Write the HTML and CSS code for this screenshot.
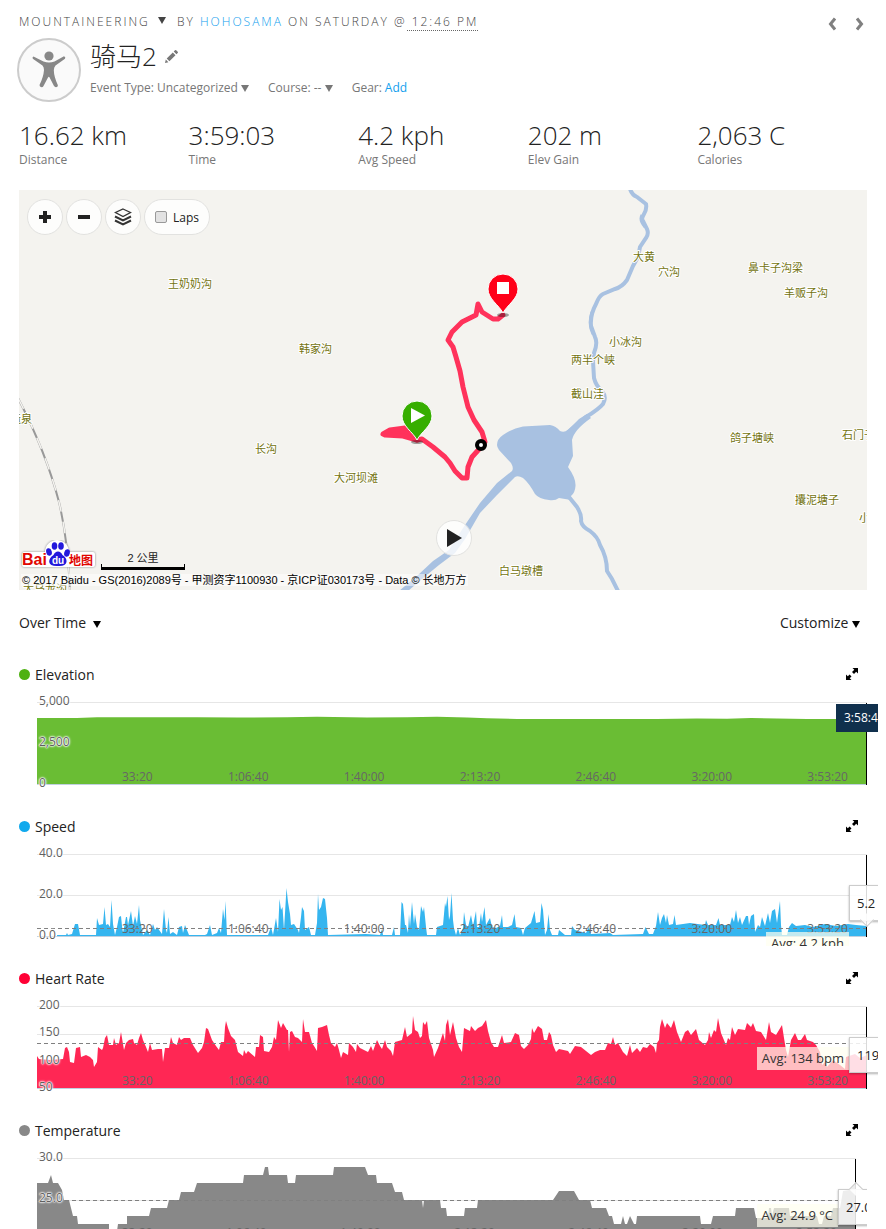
FILE: index.html
```html
<!DOCTYPE html>
<html lang="en">
<head>
  <meta charset="UTF-8" />
  <meta name="viewport" content="width=device-width, initial-scale=1.0"/>
  <title>骑马2 | Activity</title>
  <link rel="stylesheet" href="styles.css">
</head>
<body>
  <!-- shared icons -->
  <svg class="sprite" aria-hidden="true">
    <symbol id="expand" viewBox="0 0 12 12">
      <path d="M6.500 0H12v5.500L10.200 3.700 8 6 6 4l2.300-2.200zM5.500 12H0V6.500l1.800 1.800L3.600 6.600l1.900 1.900-1.800 1.700z"/>
    </symbol>
    <symbol id="pin" viewBox="-16 -40 32 44" overflow="visible">
      <ellipse cx="0" cy="2" rx="6" ry="2" fill="#000" opacity=".35"/>
      <path d="M0 0C-4-8-15-14-15-24A15 15 0 0 1 15-24C15-14 4-8 0 0z" stroke="#fff" stroke-width="1"/>
    </symbol>
  </svg>

  <div class="page">
    <header class="topline">
      <div class="crumb">
        <select id="activity-type" aria-label="Activity type"><option>Mountaineering</option></select>
        <span class="caret"></span>
        <span class="by">by <a href="#">hohosama</a> on Saturday @<span class="time"> 12:46 PM</span></span>
      </div>
      <nav class="pager">
        <a href="#" aria-label="Previous activity"><svg width="8" height="14" viewBox="0 0 8 14"><path d="M7 1.500 2.500 7 7 12.500"/></svg></a>
        <a href="#" aria-label="Next activity"><svg width="8" height="14" viewBox="0 0 8 14"><path d="M1 1.500 5.500 7 1 12.500"/></svg></a>
      </nav>
    </header>

    <section class="profile">
      <div class="avatar">
        <svg width="34" height="38" viewBox="0 0 34 38">
          <circle cx="17" cy="5" r="4.600"/>
          <path d="M1.500 5.500Q0 6 .8 7.800L10.500 14.500Q12 16 12 19 11.500 26 7.500 34 7.500 36 9.500 36.300 11 36.300 11.500 35L16 26.500Q16.800 25 17.600 26.500L22 35Q23 36.500 24.800 36 26.300 35.300 25.800 34 22 26 21.800 19 22 16 23.500 14.500L33 7.800Q34 6 32 5.300L22.500 10.500Q17 12.500 11.500 10.500z"/>
        </svg>
      </div>
      <div>
        <h1>骑马2
          <button class="edit" aria-label="Edit name">
            <svg width="13" height="13" viewBox="0 0 13 13"><path d="M0 13 .8 9.600 3.400 12.200zM1.700 8.600 7.800 2.500 10.500 5.200 4.400 11.300zM8.700 1.600 10 .3Q10.600-.2 11.200.3L12.700 1.800Q13.200 2.400 12.700 3L11.400 4.300z"/></svg>
          </button>
        </h1>
        <div class="meta">
          <div class="field">
            <label for="event-type">Event Type:</label>
            <select id="event-type"><option>Uncategorized</option></select>
            <span class="caret"></span>
          </div>
          <div class="field">
            <label for="course">Course:</label>
            <select id="course"><option>--</option></select>
            <span class="caret"></span>
          </div>
          <div class="field">Gear: <a href="#">Add</a></div>
        </div>
      </div>
    </section>

    <section class="stats">
      <div><strong>16.62 km</strong><span>Distance</span></div>
      <div><strong>3:59:03</strong><span>Time</span></div>
      <div><strong>4.2 kph</strong><span>Avg Speed</span></div>
      <div><strong>202 m</strong><span>Elev Gain</span></div>
      <div><strong>2,063 C</strong><span>Calories</span></div>
    </section>

    <section class="map">
      <svg class="map-canvas" viewBox="0 0 848 400" preserveAspectRatio="xMidYMid slice">
        <!-- water -->
        <g class="river">
          <path stroke-width="4" d="M611-1Q613 5 618 7L627 14Q628 19 625 24T624 31L628 39Q630 44 627 48L621 57 619 67 614 76 608 90Q603 97 596 99L584 104Q580 106 577 114 571 125 572 136L576 147Q579 153 575 163L574 171 575 188Q577 196 583 201 588 207 584 214 580 219 567 227L548 243"/>
          <path stroke-width="3" d="M573 122Q569 134 574 144M623 25Q620 30 626 37"/>
          <path stroke-width="4" d="M550 307 558 317Q563 325 562 331 563 337 571 341 579 347 581 355 588 367 588 381L593 389 599 401"/>
        </g>
        <g class="lake">
          <path d="M478 255Q478 249 484 245 494 238 504 236.500L531 235Q537 236 541 241 545 243 549 240L560 229 568 224 572 228Q555 240 553 250L554 266 549 277Q557 288 556.500 296 556 303 552 306V310L540 308Q536 311 530 310 520 309 516 304 510 293 504 288 499 285 496 287L478 305 461 323 446 349 436 363 420 375 403 389 389 401H380L398 386 414 371 430 360 446 335 461 313 478 293 493 281Q495 278 492 273L480 260Q478 257 478 255z"/>
        </g>

        <!-- railway -->
        <path class="rail" d="M-1 208Q27 262 40 312 49 350 51 401"/>
        <path class="rail-gap" d="M-1 208Q27 262 40 312 49 350 51 401"/>

        <!-- recorded track -->
        <path class="track" d="M484 125 479 129H474L463 122 459 114 457 125 443 132 433 142 429 150 434 157 437 167 441 181 444 197 449 217 455 230 463 242 466 252 462 257 453 267 449 277 448 288H443L436 281 431 273 426 267 414 257 403 249 398 250"/>
        <path class="track-fill" d="M364 244 371 240 386 238 398 240V250L384 246 366 245z"/>
        <circle cx="462" cy="255" r="4" fill="#fff" stroke="#000" stroke-width="4"/>

        <g class="places">
          <text x="149" y="98">王奶奶沟</text>
          <text x="280" y="163">韩家沟</text>
          <text x="614" y="71">大黄</text>
          <text x="639" y="86">穴沟</text>
          <text x="729" y="82">鼻卡子沟梁</text>
          <text x="765" y="107">羊贩子沟</text>
          <text x="590" y="156">小冰沟</text>
          <text x="552" y="174">两半个峡</text>
          <text x="552" y="208">截山洼</text>
          <text x="711" y="252">鸽子塘峡</text>
          <text x="823" y="249">石门子</text>
          <text x="776" y="314">攮泥塘子</text>
          <text x="840" y="332">小沟</text>
          <text x="480" y="385">白马墩槽</text>
          <text x="236" y="263">长沟</text>
          <text x="315" y="292">大河坝滩</text>
          <text x="-9" y="233">造泉</text>
          <text x="4" y="403">大乌龙沟</text>
        </g>

        <use href="#pin" x="468" y="83" width="32" height="44" fill="#ff0019"/>
        <rect x="478" y="92" width="12" height="12" fill="#fff"/>
        <use href="#pin" x="382" y="210" width="32" height="44" fill="#36ae00"/>
        <path d="M392 218 406 225.500 392 233z" fill="#fff"/>
      </svg>

      <div class="map-controls">
        <button aria-label="Zoom in"><svg width="14" height="14" viewBox="0 0 14 14"><path d="M5 1H9V5H13V9H9V13H5V9H1V5H5z" fill="#222"/></svg></button>
        <button aria-label="Zoom out"><svg width="14" height="14" viewBox="0 0 14 14"><path d="M1 5H13V9H1z" fill="#222"/></svg></button>
        <button aria-label="Map layers">
          <svg width="18" height="18" viewBox="0 0 18 18" fill="none" stroke="#333"><path d="M9 1 16.500 4.500 9 8.500 1.500 4.500z" stroke-width="1.300"/><path d="M1 8.500 9 12.500 17 8.500M1 12.500 9 16.500 17 12.500" stroke-width="2"/></svg>
        </button>
        <label class="laps"><input type="checkbox"> Laps</label>
      </div>

      <button class="play" aria-label="Play"><svg width="15" height="18" viewBox="0 0 15 18"><path d="M0 0 15 9 0 18z" fill="#222"/></svg></button>

      <div class="map-legend">
        <svg class="baidu" width="77" height="30" viewBox="0 0 77 30">
          <g class="baidu-halo">
            <path d="M4 14H73V25H4z"/>
            <circle cx="37" cy="12" r="10"/>
          </g>
          <text class="baidu-name" x="2" y="25">Bai</text>
          <g fill="#2319dc">
            <ellipse cx="29" cy="12" rx="2.800" ry="3.800" transform="rotate(-15 29 12)"/>
            <ellipse cx="34.500" cy="6" rx="2.800" ry="3.800"/>
            <ellipse cx="41" cy="6" rx="2.800" ry="3.800"/>
            <ellipse cx="47" cy="13" rx="2.800" ry="3.800" transform="rotate(15 47 13)"/>
            <path d="M38 11.500Q41 11.500 42.500 15 47 18 46.500 22 45.500 26.500 38 26 30 26.500 29.200 22 29 18 33.500 15 35 11.500 38 11.500z"/>
          </g>
          <text class="baidu-du" x="32" y="24">du</text>
          <text class="baidu-map" x="49" y="25">地图</text>
        </svg>
        <div class="scale">2 公里</div>
      </div>
      <div class="copyright">© 2017 Baidu - GS(2016)2089号 - 甲测资字1100930 - 京ICP证030173号 - Data © 长地万方</div>
    </section>

    <div class="chart-tools">
      <button>Over Time <span class="caret"></span></button>
      <button>Customize <span class="caret"></span></button>
    </div>

    <section class="chart">
      <div class="chart-head">
        <h2 class="elevation">Elevation</h2>
        <button aria-label="Expand elevation"><svg width="12" height="12"><use href="#expand"/></svg></button>
      </div>
      <div class="chart-frame">
        <div class="plot">
          <svg viewBox="0 0 830 83" preserveAspectRatio="none">
            <path class="grid" d="M0 .5H830M0 41.500H830"/>
            <path fill="#6abd34" d="M0 83V16H40L60 15.300H160L200 15.600 250 15.300 280 14.700 330 15.500 370 15.300 400 14.800 430 15.500 450 16.300 480 17H620L660 16.600 690 16.700 714 16 740 16.600 770 17H830V83z"/>
            <path class="axis" d="M0 82.500H830"/>
          </svg>
          <div class="y-axis"><span>5,000</span><span>2,500</span><span>0</span></div>
          <div class="x-axis"><span>33:20</span><span>1:06:40</span><span>1:40:00</span><span>2:13:20</span><span>2:46:40</span><span>3:20:00</span><span>3:53:20</span></div>
          <div class="cursor"></div>
          <div class="tip tip-time">3:58:43</div>
        </div>
      </div>
    </section>

    <section class="chart">
      <div class="chart-head">
        <h2 class="speed">Speed</h2>
        <button aria-label="Expand speed"><svg width="12" height="12"><use href="#expand"/></svg></button>
      </div>
      <div class="chart-frame">
        <div class="plot">
          <svg viewBox="0 0 830 83" preserveAspectRatio="none">
            <path class="grid" d="M0 .5H830M0 41.500H830"/>
            <path fill="#35b5ef" d="M0 83H20V81L29 81 30 79 31 81 35 80 38 70 41 70 43 81 59 81 60 64 62 71 66 70 67.500 53 69 71 71 70 73 73 74.500 46 76 70 78 81 80 73 82 63 84 62 85 72 86 79 89 63 90 63 91 71 94 57 96 72 98 62 100 70 102 51 103 66 106 81 110 76 113 81 116 70 118 76 120 73 125 80 127 55 129 76 130 79 131.500 63 133 80 136 78 140 81 142 73 145 72 146 79 148 71 152 81 168 81 170 80 173 71 175 81 180 79 182 74 184 79 186 55 187.500 66 188.500 47 190 81 231 81 234 73 236 81 239 64 241 78 242.500 45 244 56 245.500 53 247 76 248 59 249.500 34 251 48 253 60 254 71 257 70 261 76 262 79 264 63 265 53 267 57 268 76 272 73 274 81 278 81 280 69 281 40 282 56 284 53 286 44 288 45 290 64 291 81 329 80 343 81 345 75 346 81 355 81 357 73 358 81 363 81 364.500 48 366 50 368 71 369 71 371 79 372 60 373 73 375 48 377 70 378 60 380 73 382 76 384 52 386 58 387 53 389 73 390 81 399 81 400 73 406 71 408 49 409 53 410.500 42 412 66 413 62 414.500 39 416 66 417 74 419 81 421 74 423 81 426 74 427 58 429 71 431 73 434 61 436 72 439 57 440 73 442 73 444 59 445 68 447.500 53 449 71 453 64 455 73 459 74 463 72 465 61 466 73 471 73 475 71 477.500 60 479 73 484 74 486 81 488 74 494 69 497.500 57 499 69 503 68 504.500 49 506 56 508 81 510 76 511.500 60 513 76 515 81 521 81 522 76 528 81 534 81 535 72 538 76 549 79 552 73 554 80 573 79 576 81 606 80 608.500 73 612 80 616 80 619 72 621 58 623 71 625 64 627 60 629 69 630 61 632 71 636 70 637.500 61 639 71 653 69 668 71 669 66 671 71 679 71 681.500 64 683 71 693 71 695 63 697 68 699 56 701 69 703 63 705 71 709 62 711 62 712 71 714 62 717 60 718 78 721 71 723 73 725 63 728 72 731 59 733 69 735 57 738 55 740 69 743 47 744 71 745 81 750 81 752 73 755 69 759 72 768 71 776 73 788 70 799 72 811 70 819 71 830 72V83z"/>
            <path class="axis" d="M0 82.500H830"/>
            <path class="average" d="M0 74.500H830"/>
          </svg>
          <div class="y-axis"><span>40.0</span><span>20.0</span><span>0.0</span></div>
          <div class="x-axis"><span>33:20</span><span>1:06:40</span><span>1:40:00</span><span>2:13:20</span><span>2:46:40</span><span>3:20:00</span><span>3:53:20</span></div>
          <div class="cursor"></div>
          <div class="avg avg-speed">Avg: 4.2 kph</div>
          <div class="tip tip-speed">5.2 kph</div>
        </div>
      </div>
    </section>

    <section class="chart">
      <div class="chart-head">
        <h2 class="heart">Heart Rate</h2>
        <button aria-label="Expand heart rate"><svg width="12" height="12"><use href="#expand"/></svg></button>
      </div>
      <div class="chart-frame">
        <div class="plot">
          <svg viewBox="0 0 830 83" preserveAspectRatio="none">
            <path class="grid" d="M0 .5H830M0 28.500H830"/>
            <path fill="#ff2754" d="M0 83V50L2 53 13 54 26 53 28 42 30 41 32 46 33 56 37 57 39 42 43 41 44 51 49 49 53 51 56 54 57 61 60 56 61 41 65 44 66 42 68 32 70 29 72 39 76 39 77 32 79 39 82 37 84 26 85 32 87 44 89 37 92 34 96 33 97 37 100 39 102 32 104 27 106 34 109 41 111 46 113 37 115 44 121 43 125 43 126 56 128 42 132 42 134 31 136 37 140 39 142 31 144 34 147 32 153 32 156 39 161 47 165 42 167 36 169 22 171 23 175 34 179 40 182 44 184 36 187 36 188 21 189 15 191 22 194 30 198 34 201 46 206 50 207 44 209 48 211 45 218 51 219 41 222 41 223 29 226 31 227 45 232 46 235 41 237 31 239 34 241 14 244 22 246 17 250 24 251 24 252 46 253 26 255 25 258 31 261 32 265 36 266 13 268 26 272 26 275 37 277 40 280 45 281 22 285 21 290 19 292 29 294 37 298 41 300 37 302 44 304 52 306 46 311 49 312 37 316 41 319 46 320 38 323 42 331 46 334 40 336 45 340 34 343 40 345 43 348 34 350 41 354 45 356 50 358 36 365 34 368 21 370 31 375 27 376 10 378 24 381 26 383 32 385 30 386 16 388 19 390 15 392 32 396 44 397 51 401 42 406 27 408 35 409 19 411 13 413 29 416 16 419 32 422 41 425 46 427 22 433 25 434 20 438 25 441 22 445 20 449 14 451 25 454 36 457 41 461 41 465 29 467 37 474 36 478 27 482 29 484 40 487 43 491 39 494 33 495 22 497 27 501 20 505 23 507 34 510 34 512 26 514 29 516 39 519 46 522 43 531 45 533 48 538 40 544 41 554 49 558 46 563 44 568 44 571 37 574 38 576 31 578 39 581 37 586 46 590 50 593 39 595 47 600 42 603 46 606 41 610 42 613 38 617 41 619 47 620 37 622 34 623 21 625 13 628 22 630 17 634 22 637 14 640 26 644 36 648 26 651 24 654 29 659 23 662 34 668 39 671 34 672 26 674 32 677 24 679 26 681 12 684 27 689 39 691 32 693 34 695 21 698 29 701 23 708 24 710 17 714 21 716 17 719 25 724 26 729 34 732 16 734 26 739 29 745 19 747 32 749 44 751 51 754 34 758 27 761 34 764 34 768 28 770 34 776 36 779 39 783 46 785 59 788 56 790 61 796 54 803 59 808 63 809 51 818 48 823 52 830 49V83z"/>
            <path class="axis" d="M0 82.500H830"/>
            <path class="average" d="M0 37.500H830"/>
          </svg>
          <div class="y-axis"><span>200</span><span>150</span><span>100</span><span>50</span></div>
          <div class="x-axis"><span>33:20</span><span>1:06:40</span><span>1:40:00</span><span>2:13:20</span><span>2:46:40</span><span>3:20:00</span><span>3:53:20</span></div>
          <div class="cursor"></div>
          <div class="avg avg-heart">Avg: 134 bpm</div>
          <div class="tip tip-heart">119 bpm</div>
        </div>
      </div>
    </section>

    <section class="chart">
      <div class="chart-head">
        <h2 class="temperature">Temperature</h2>
        <button aria-label="Expand temperature"><svg width="12" height="12"><use href="#expand"/></svg></button>
      </div>
      <div class="chart-frame chart-frame-narrow">
        <div class="plot">
          <svg viewBox="0 0 819 83" preserveAspectRatio="none">
            <path class="grid" d="M0 .5H819M0 42.500H819"/>
            <path fill="#888" d="M0 83V25H11L14 17 16 25H21L25 32 27 42H32L34 50 36 58H40L41 66H72V73H80L81 66H90V58H112L114 50H130L132 42H142L144 34H157L160 25H206L207 17H226L228 9H231L232 17H250L251 25H258L259 17H296L297 9H328L331 17H339L340 25H355L358 34H365L367 42H385L386 50 387 42H403L404 50H409L410 58H427L428 50H440L441 42H516L522 33H537L542 42H553L555 50H569L572 58H575L577 66H584L586 58 588 66H590L593 58 597 66H599L600 58H663L664 66H674L676 58H698L699 50H717L719 60H731L732 50H734L735 58 737 50H752L753 58H780L782 66H785L787 58H794L796 50H803L806 33 812 32 818 25H819V83z"/>
            <path class="average" d="M0 42.500H819"/>
          </svg>
          <div class="y-axis"><span>30.0</span><span>25.0</span><span>20.0</span></div>
          <div class="x-axis"><span>33:20</span><span>1:06:40</span><span>1:40:00</span><span>2:13:20</span><span>2:46:40</span><span>3:20:00</span><span>3:53:20</span></div>
          <div class="cursor"></div>
          <div class="avg avg-temperature">Avg: 24.9 °C</div>
          <div class="tip tip-temperature">27.0 °C</div>
        </div>
      </div>
    </section>
  </div>
</body>
</html>
```

FILE: styles.css
```css
* {
  box-sizing: border-box;
  margin: 0;
  padding: 0;
}
body {
  margin: 0 8px;
  background: #fff;
  color: #222;
  font-family: 'Open Sans', 'Noto Sans CJK SC', sans-serif;
  font-size: 12px;
}
a {
  color: #11a0ee;
  text-decoration: none;
}
button,
select {
  appearance: none;
  border: none;
  background: none;
  color: inherit;
  font: inherit;
  letter-spacing: inherit;
  text-transform: inherit;
  cursor: pointer;
}
.sprite {
  position: absolute;
  width: 0;
  height: 0;
}
.page {
  height: 100vh;
  padding: 12px 11px 0;
  overflow: hidden;
}
.caret {
  display: inline-block;
  border: 4px solid transparent;
  border-top: 7px solid currentColor;
  border-bottom: none;
}

/* header */
.topline {
  display: flex;
  justify-content: space-between;
  align-items: center;
  line-height: 20px;
  margin-bottom: 6px;
}
.crumb {
  display: flex;
  align-items: center;
  color: #444;
  font-weight: 300;
  letter-spacing: 2px;
  text-transform: uppercase;
}
.crumb .caret {
  margin: 0 11px 4px 8px;
}
.time {
  border-bottom: 1px dotted #666;
  white-space: pre;
}
.pager {
  display: flex;
  gap: 20px;
  padding: 3px 3px 0 0;
}
.pager svg {
  display: block;
  fill: none;
  stroke: #808080;
  stroke-width: 3;
}
.profile {
  display: flex;
  gap: 9px;
  margin-left: -2px;
}
.avatar {
  display: flex;
  align-items: center;
  justify-content: center;
  width: 64px;
  height: 64px;
  border: 2px solid #ccc;
  border-radius: 50%;
  background: #fafafa;
  fill: #888;
}
h1 {
  display: flex;
  align-items: center;
  gap: 8px;
  font-size: 26px;
  font-weight: 300;
  line-height: 36px;
}
.edit {
  display: flex;
  fill: #777;
}
.meta {
  display: flex;
  gap: 19px;
  margin-top: 5px;
  color: #777;
  line-height: 18px;
}
.field {
  display: flex;
  align-items: center;
  gap: 3px;
}

/* totals */
.stats {
  display: grid;
  grid-template-columns: repeat(5, 1fr);
  margin: 17px 0 22px;
}
.stats strong {
  display: block;
  padding-bottom: 1px;
  font-size: 26px;
  font-weight: 300;
  line-height: 32px;
}
.stats span {
  display: block;
  color: #777;
  line-height: 16px;
}

/* map */
.map {
  position: relative;
  height: 400px;
  overflow: hidden;
  background: #f4f3ef;
}
.map-canvas {
  display: block;
  width: 100%;
  height: 100%;
}
.river path {
  fill: none;
  stroke: #a8c1e1;
}
.lake {
  fill: #a8c1e1;
}
.rail {
  fill: none;
  stroke: #999;
  stroke-width: 2;
}
.rail-gap {
  fill: none;
  stroke: #f4f3ef;
  stroke-width: 1.5;
  stroke-dasharray: 12 10;
}
.track {
  fill: none;
  stroke: #ff325b;
  stroke-width: 5;
  stroke-linejoin: round;
  stroke-linecap: round;
}
.track-fill {
  fill: #ff325b;
  stroke: #ff325b;
  stroke-width: 5;
  stroke-linejoin: round;
}
.places text {
  font-family: 'Noto Sans CJK SC', sans-serif;
  font-size: 11px;
  fill: #73730f;
  stroke: #fff;
  stroke-width: 2;
  stroke-linejoin: round;
  paint-order: stroke;
}
.map-controls {
  position: absolute;
  top: 9px;
  left: 8px;
  display: flex;
  gap: 3px;
}
.map-controls button,
.laps,
.play {
  display: flex;
  align-items: center;
  justify-content: center;
  width: 36px;
  height: 36px;
  border: 1px solid #e2e2e0;
  border-radius: 18px;
  background: rgba(255, 255, 255, 0.8);
}
.laps {
  width: auto;
  padding: 0 10px;
  gap: 6px;
}
.laps input {
  appearance: none;
  width: 12px;
  height: 12px;
  border: 1px solid #999;
  border-radius: 2px;
  background: #e2e2e2;
}
.play {
  position: absolute;
  left: calc(50% - 7px);
  bottom: 34px;
}
.map-legend {
  position: absolute;
  left: 1px;
  bottom: 20px;
  display: flex;
  align-items: flex-end;
  gap: 4px;
}
.baidu-halo {
  fill: #fff;
  stroke: #fff;
  stroke-width: 4;
  stroke-linejoin: round;
  filter: drop-shadow(0 0 1px #888);
}
.baidu text {
  font-family: 'Liberation Sans', 'Noto Sans CJK SC', sans-serif;
  font-weight: bold;
}
.baidu .baidu-name {
  font-size: 16px;
  fill: #e10601;
}
.baidu .baidu-du {
  font-size: 10px;
  fill: #fff;
}
.baidu .baidu-map {
  font-size: 12px;
  fill: #e10601;
}
.scale {
  position: relative;
  width: 84px;
  height: 20px;
  border-bottom: 3px solid #000;
  font: 11px/16px 'Liberation Sans', 'Noto Sans CJK SC', sans-serif;
  text-align: center;
}
.scale::after {
  content: '';
  position: absolute;
  inset: 14px 0 0;
  border: solid #000;
  border-width: 0 1px;
}
.copyright {
  position: absolute;
  left: 2px;
  bottom: 4px;
  padding: 0 1px;
  background: rgba(255, 255, 255, 0.5);
  color: #000;
  font: 11px/12px 'Liberation Sans', 'Noto Sans CJK SC', sans-serif;
  white-space: nowrap;
}

/* charts */
.chart-tools {
  display: flex;
  justify-content: space-between;
  margin: 21px 0 28px;
  padding-right: 7px;
  font-size: 14px;
  line-height: 24px;
}
.chart-tools .caret {
  color: #000;
}
.chart-tools button:first-child .caret {
  margin-left: 3px;
}
.chart {
  margin-bottom: 21px;
}
.chart-head {
  display: flex;
  justify-content: space-between;
  align-items: center;
  height: 22px;
  margin-bottom: 9px;
  padding-right: 9px;
}
.chart-head button svg {
  display: block;
}
h2 {
  display: flex;
  align-items: center;
  gap: 5px;
  font-size: 14px;
  font-weight: 400;
}
h2::before {
  content: '';
  width: 11px;
  height: 11px;
  border-radius: 50%;
  background: #888;
}
.elevation::before {
  background: #4eb112;
}
.speed::before {
  background: #11a9ed;
}
.heart::before {
  background: #ff0035;
}
.chart-frame {
  margin-right: -11px;
  padding: 8px 11px 9px 18px;
  overflow: hidden;
}
.chart-frame-narrow {
  margin-right: 0;
}
.plot {
  position: relative;
  height: 83px;
}
.plot svg {
  display: block;
  width: 100%;
  height: 100%;
}
.grid {
  stroke: #e6e6e6;
}
.axis {
  stroke: #c0d0e0;
}
.average {
  stroke: #808080;
  stroke-dasharray: 4 3;
}
.y-axis {
  position: absolute;
  top: -8px;
  bottom: -5px;
  left: 2px;
  display: flex;
  flex-direction: column;
  justify-content: space-between;
  color: #606060;
  line-height: 14px;
  text-shadow: 0 0 1px #fff, 0 0 1px #fff, 0 0 2px #fff, 0 0 2px #fff, 0 0 3px #fff;
}
.x-axis {
  position: absolute;
  bottom: 1px;
  left: 0;
  right: 0;
  display: flex;
  justify-content: space-between;
  padding: 0 19px 0 85px;
  color: #666;
  line-height: 14px;
}
.cursor {
  position: absolute;
  top: 1px;
  right: 0;
  bottom: 0;
  border-right: 1px solid #000;
}
.avg {
  position: absolute;
  right: 18px;
  padding: 0 5px;
  background: rgba(255, 255, 240, 0.7);
  color: #333;
  font-size: 13px;
  line-height: 23px;
}
.avg-speed {
  top: 78px;
}
.avg-heart {
  top: 41px;
}
.avg-temperature {
  top: 46px;
}
.tip {
  position: absolute;
  left: calc(100% - 18px);
  padding: 0 7px;
  border: 1px solid #ccc;
  background: rgba(255, 255, 255, 0.85);
  box-shadow: 0 1px 2px rgba(0, 0, 0, 0.3);
  font-size: 13px;
  line-height: 34px;
  white-space: nowrap;
}
.tip::after {
  content: '';
  position: absolute;
  left: 12px;
  width: 9px;
  height: 9px;
  background: inherit;
  border: solid #ccc;
  border-width: 0 1px 1px 0;
  rotate: 45deg;
}
.tip-time {
  top: 2px;
  left: calc(100% - 31px);
  padding: 0 8px;
  border: none;
  background: #10304d;
  box-shadow: none;
  color: #fff;
  font-size: 12px;
  line-height: 28px;
}
.tip-time::after,
.tip-heart::after {
  display: none;
}
.tip-speed {
  top: 31px;
}
.tip-speed::after {
  bottom: -5px;
}
.tip-heart {
  top: 31px;
}
.tip-temperature {
  top: 31px;
}
.tip-temperature::after {
  top: -6px;
  border-width: 1px 0 0 1px;
}
```
